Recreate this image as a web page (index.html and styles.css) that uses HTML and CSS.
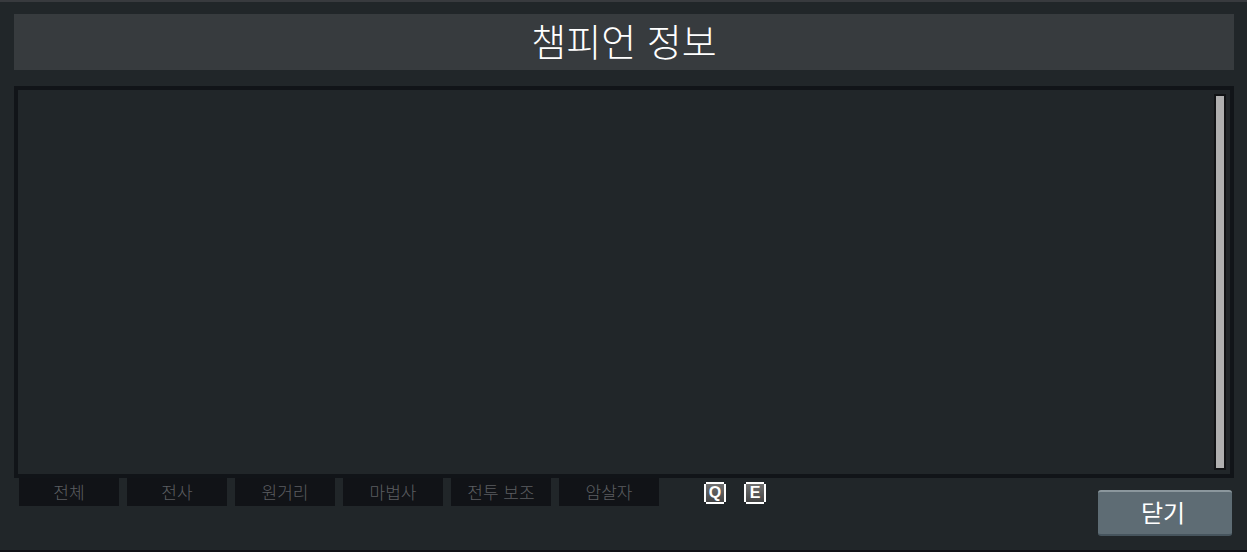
FILE: index.html
```html
<!DOCTYPE html>
<html lang="ko">
<head>
<meta charset="utf-8">
<title>챔피언 정보</title>
<link rel="stylesheet" href="styles.css">
</head>
<body>
<main class="window">
  <h1 class="title">챔피언 정보</h1>
  <section class="panel" aria-label="챔피언 정보">
    <div class="content"></div>
    <div class="track"><div class="thumb"></div></div>
  </section>
  <footer class="footer">
    <nav class="tabs">
      <button class="tab" type="button">전체</button>
      <button class="tab" type="button">전사</button>
      <button class="tab" type="button">원거리</button>
      <button class="tab" type="button">마법사</button>
      <button class="tab" type="button">전투 보조</button>
      <button class="tab" type="button">암살자</button>
    </nav>
    <div class="keys"><kbd class="key">Q</kbd><kbd class="key">E</kbd></div>
    <button class="close" type="button">닫기</button>
  </footer>
</main>
</body>
</html>
```
FILE: styles.css
```css
* { box-sizing: border-box; }

body {
  margin: 0;
  background: #212629;
  color: #fff;
  font-family: "Noto Sans CJK KR", "Noto Sans", sans-serif;
}

.window {
  display: flex;
  flex-direction: column;
  min-height: 100vh;
  padding: 12px 13px 0 14px;
  border-top: 2px solid #383a3e;
  border-bottom: 2px solid #101217;
}

.title {
  margin: 0 0 16px;
  padding-bottom: 4px;
  background: #373b3e;
  font-size: 38px;
  font-weight: 300;
  line-height: 52px;
  text-align: center;
}

.panel {
  display: flex;
  flex: 1;
  padding: 4px;
  border: 4px solid #111418;
}

.content { flex: 1; }

.track {
  display: flex;
  width: 12px;
  padding: 2px;
  background: #111315;
}

.thumb {
  flex: 1;
  background: #b0b0b0;
}

.footer {
  display: flex;
  align-items: flex-start;
  height: 72px;
  padding: 0 2px 0 5px;
}

.tabs {
  display: flex;
  gap: 8px;
}

.tab {
  width: 100px;
  height: 28px;
  padding: 0;
  border: 0;
  background: #111317;
  color: #5c5e61;
  font-family: inherit;
  font-size: 17px;
  font-weight: 300;
  line-height: 28px;
}

.keys {
  display: flex;
  gap: 18px;
  margin: 4px 0 0 45px;
}

/* Key cap with 2px notches cut out of its corners */
.key {
  width: 22px;
  height: 22px;
  border: 2px solid #fff;
  background: linear-gradient(#707070, #444);
  clip-path: polygon(2px 0, 20px 0, 20px 2px, 22px 2px, 22px 20px, 20px 20px, 20px 22px, 2px 22px, 2px 20px, 0 20px, 0 2px, 2px 2px);
  font-family: "Liberation Sans", sans-serif;
  font-size: 16px;
  font-weight: 700;
  line-height: 17px;
  text-align: center;
}

.close {
  width: 134px;
  height: 46px;
  margin: 12px 0 0 auto;
  padding: 0 4px 2px 0;
  border: 0;
  border-top: 2px solid #8b979d;
  border-bottom: 2px solid #46545d;
  border-radius: 3px;
  background: #5e6c74;
  color: #fff;
  font-family: inherit;
  font-size: 24px;
  line-height: 40px;
}
```
